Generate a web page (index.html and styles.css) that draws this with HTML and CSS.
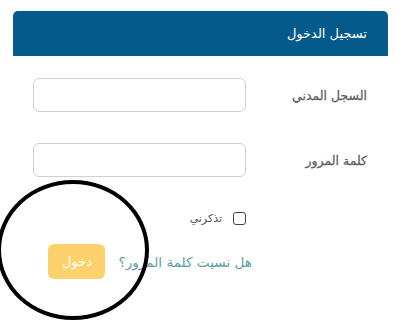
FILE: index.html
```html
<!DOCTYPE html>
<html lang="ar" dir="rtl">
<head>
<meta charset="utf-8">
<link rel="stylesheet" href="styles.css">
</head>
<body>
<div class="card">
  <div class="card-header">تسجيل الدخول</div>
  <div class="card-body">
    <div class="row">
      <label class="label">السجل المدني</label>
      <input class="input" type="text">
    </div>
    <div class="row row-2">
      <label class="label">كلمة المرور</label>
      <input class="input" type="password">
    </div>
    <div class="check-row">
      <span class="box"></span>
      <span class="check-text">تذكرني</span>
    </div>
    <div class="action-row">
      <a class="forgot">هل نسيت كلمة المرور؟</a>
      <button class="btn">دخول</button>
    </div>
  </div>
</div>
<div class="annotation"></div>
</body>
</html>
```
FILE: styles.css
```css
html, body { margin: 0; padding: 0; background: #fff; }
body {
  font-family: "DejaVu Sans", "Noto Sans", sans-serif;
  padding-top: 11px;
  width: 419px;
  height: 329px;
  overflow: hidden;
  position: relative;
}
.card {
  margin-right: 31px;
  width: 375px;
}
.card-header {
  background: #045a8b;
  color: #fff;
  height: 45px;
  border-radius: 5px 5px 0 0;
  padding-right: 21px;
  font-size: 13px;
  line-height: 45px;
}
.card-body {
  padding: 22px 21px 0 20px;
}
.row {
  display: flex;
  align-items: center;
  gap: 21px;
}
.row-2 { margin-top: 31px; }
.label {
  width: 100px;
  font-size: 12.5px;
  color: #5f5f5f;
  font-weight: normal;
  -webkit-text-stroke: 0.3px #5f5f5f;
}
.input {
  width: 213px;
  height: 34px;
  box-sizing: border-box;
  border: 1px solid #d0d0d0;
  border-radius: 6px;
  margin: 0;
}
.check-row {
  display: flex;
  align-items: center;
  margin-top: 35px;
  margin-right: 121px;
  gap: 11px;
}
.box {
  width: 13px;
  height: 13px;
  box-sizing: border-box;
  border: 1.5px solid #444;
  border-radius: 3px;
}
.check-text { font-size: 11px; color: #555; }
.action-row {
  display: flex;
  align-items: center;
  margin-top: 19px;
  margin-right: 115px;
  gap: 13px;
}
.forgot { color: #5c9ea3; font-size: 13.6px; }
.btn {
  width: 57px;
  height: 35px;
  background: #fdd16b;
  color: #fff;
  border: none;
  border-radius: 6px;
  font-family: inherit;
  font-size: 13px;
}
.annotation {
  position: absolute;
  left: -3px;
  top: 180px;
  width: 152px;
  height: 140px;
  border: 4px solid #000;
  border-radius: 50%;
  box-sizing: border-box;
}
```
